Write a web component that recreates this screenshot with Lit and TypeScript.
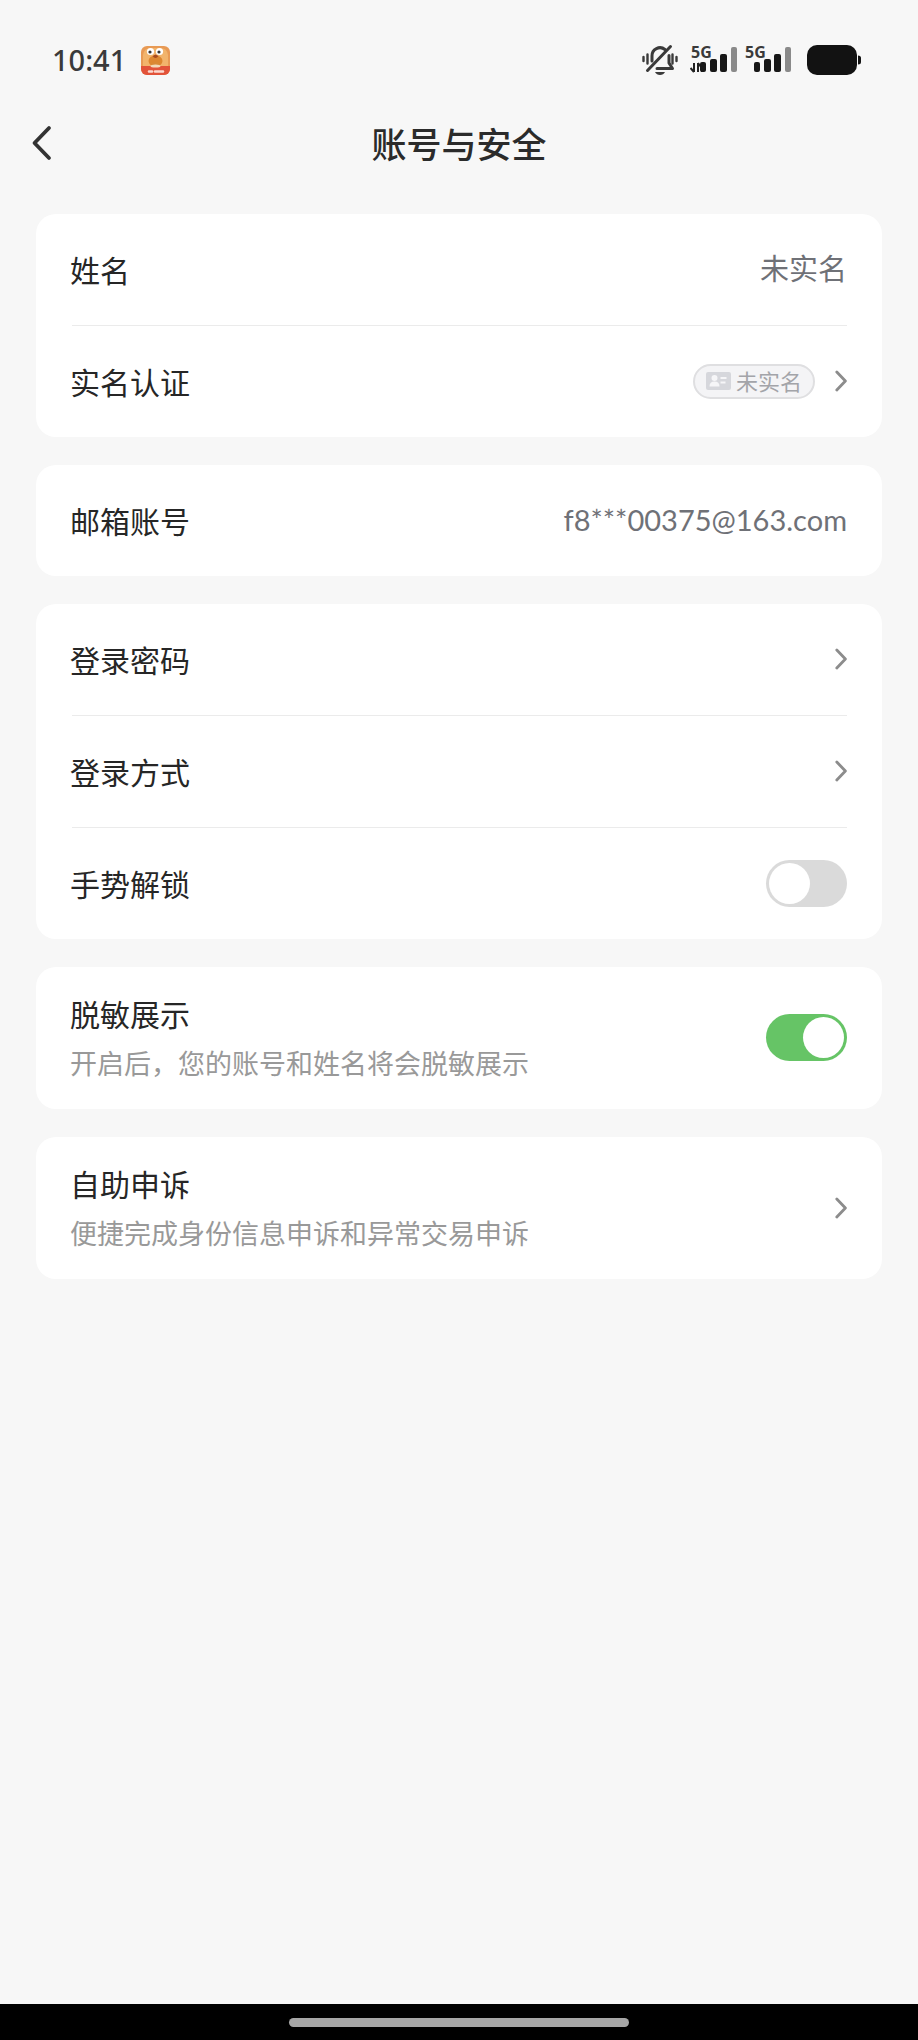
import { LitElement, html, svg, css, nothing } from "lit";
import { customElement, property, state } from "lit/decorators.js";

type Row = {
  id: string;
  label: string;
  note?: string;
  value?: string;
  badge?: string;
  kind: "text" | "link" | "switch";
};

const GROUPS: Row[][] = [
  [
    { id: "name", label: "姓名", value: "未实名", kind: "text" },
    { id: "verify", label: "实名认证", badge: "未实名", kind: "link" },
  ],
  [{ id: "email", label: "邮箱账号", value: "f8***00375@163.com", kind: "text" }],
  [
    { id: "password", label: "登录密码", kind: "link" },
    { id: "method", label: "登录方式", kind: "link" },
    { id: "gesture", label: "手势解锁", kind: "switch" },
  ],
  [{ id: "mask", label: "脱敏展示", note: "开启后，您的账号和姓名将会脱敏展示", kind: "switch" }],
  [{ id: "appeal", label: "自助申诉", note: "便捷完成身份信息申诉和异常交易申诉", kind: "link" }],
];

@customElement("status-bar")
export class StatusBar extends LitElement {
  static styles = css`
    :host {
      display: flex;
      align-items: center;
      justify-content: space-between;
      height: 56px;
      padding: 32px 57px 0 52px;
    }
    .side {
      display: flex;
      align-items: center;
    }
    .time {
      font-family: "Noto Sans", sans-serif;
      font-size: 29px;
      line-height: 40px;
      font-weight: 500;
      color: #3a3a3a;
    }
    .app {
      margin-left: 15px;
    }
    .bell {
      margin-right: 12px;
    }
    .signal {
      margin-right: 5px;
    }
    .signal.last {
      margin-right: 14px;
    }
    svg {
      display: block;
    }
    .net {
      font-family: "Noto Sans", sans-serif;
      font-size: 16px;
      font-weight: 700;
      fill: #3a3a3a;
    }
  `;

  private signal(last: boolean) {
    return html`<svg class="signal ${last ? "last" : ""}" width="49" height="46" viewBox="0 -8 49 46" aria-hidden="true">
      <text class="net" x="1" y="13">5G</text>
      ${last
        ? nothing
        : svg`<path d="M4 18v9M4 27l-3.500-4M8 27v-9M8 18l3 4M12 18v9" fill="none" stroke="#222" stroke-width="2" />`}
      <rect x="10" y="17" width="6" height="10" rx="2" fill="#171717" />
      <rect x="20" y="14" width="7" height="13" rx="2" fill="#171717" />
      <rect x="30" y="9" width="7" height="18" rx="2" fill="#171717" />
      <rect x="41" y="2" width="6" height="25" rx="2" fill="#8a8a8a" />
    </svg>`;
  }

  render() {
    return html`
      <div class="side">
        <span class="time">10:41</span>
        <svg class="app" width="29" height="29" viewBox="0 0 29 29" aria-hidden="true">
          <defs>
            <clipPath id="tile"><rect width="29" height="29" rx="6" /></clipPath>
          </defs>
          <g clip-path="url(#tile)">
            <rect width="29" height="29" fill="#e89a55" />
            <path d="M2 21V9Q3 2 10 2h9q7 0 8 7v12z" fill="#f2b46c" />
            <ellipse cx="14.500" cy="15" rx="7" ry="5.500" fill="#dd8730" />
            <rect y="20" width="29" height="9" fill="#e2533a" />
            <path d="M10 21q0-5 4.500-5t4.500 5z" fill="#d98a35" />
            <ellipse cx="14.500" cy="20" rx="5" ry="1.600" fill="#f3d9b8" />
            <circle cx="9.500" cy="5.500" r="3.600" fill="#fff" />
            <circle cx="18.500" cy="5.500" r="3.600" fill="#fff" />
            <circle cx="9" cy="6" r="1.600" fill="#333" />
            <circle cx="18" cy="6" r="1.600" fill="#333" />
            <path d="M11.500 10q3 4 6 0l-3-1.500z" fill="#a84a1c" />
            <path d="M8 25.500h3M14 25.500h8" stroke="#fbd9cf" stroke-width="2.600" stroke-linecap="round" />
          </g>
        </svg>
      </div>
      <div class="side">
        <svg class="bell" width="36" height="32" viewBox="0 0 36 32" fill="none" stroke="#3a3a3a" stroke-linecap="round" stroke-linejoin="round" aria-hidden="true">
          <path d="M10 17v-5a8 8 0 0 1 13-6.500" stroke-width="3" />
          <path d="M27 11.500v7.500l3.500 5.500H15" stroke-width="3" />
          <path d="M5.500 26.500 28.500 2.500" stroke-width="3" />
          <path d="M13 28h10q-1.500 3-5 3t-5-3z" fill="#3a3a3a" stroke="none" />
          <path d="M5.500 10.500v9M30.500 10.500v9M1.500 13v4M34.500 13v4" stroke-width="2.400" />
        </svg>
        ${this.signal(false)} ${this.signal(true)}
        <svg width="54" height="30" viewBox="0 0 54 30" aria-hidden="true">
          <rect width="50" height="30" rx="10" fill="#121212" />
          <path d="M51 10.500q3 0 3 2.500v4q0 2.500-3 2.500z" fill="#121212" />
        </svg>
      </div>
    `;
  }
}

@customElement("settings-row")
export class SettingsRow extends LitElement {
  static styles = css`
    :host {
      display: block;
    }
    .row {
      box-sizing: border-box;
      display: flex;
      align-items: center;
      justify-content: space-between;
      gap: 20px;
      width: 100%;
      min-height: 111px;
      margin: 0;
      padding: 21px 35px 22px 34px;
      border: 0;
      background: none;
      font: inherit;
      color: inherit;
      text-align: left;
    }
    button.row,
    .switch {
      cursor: pointer;
    }
    .texts {
      display: flex;
      flex-direction: column;
    }
    .label {
      font-size: 30px;
      line-height: 50px;
      color: #262626;
    }
    .note {
      font-size: 27px;
      line-height: 49px;
      color: #999;
    }
    .value {
      font-family: Lato, "Noto Sans CJK SC", sans-serif;
      font-size: 29px;
      line-height: 50px;
      color: #6f7177;
    }
    .tail {
      display: flex;
      align-items: center;
      gap: 20px;
    }
    .badge {
      box-sizing: border-box;
      display: flex;
      align-items: center;
      gap: 5px;
      height: 35px;
      padding: 0 11px;
      border: 2px solid #dfdfe1;
      border-radius: 18px;
      background: #f4f4f6;
      font-size: 22px;
      line-height: 28px;
      color: #a3a4a9;
    }
    .badge-text {
      padding-bottom: 3px;
    }
    svg {
      display: block;
      flex: none;
    }
    .switch {
      appearance: none;
      box-sizing: border-box;
      flex: none;
      display: flex;
      width: 81px;
      height: 47px;
      margin: 0;
      padding: 3px;
      border-radius: 24px;
      background: #dadada;
    }
    .switch::before {
      content: "";
      width: 41px;
      height: 41px;
      border-radius: 50%;
      background: #fff;
    }
    .switch:checked {
      justify-content: flex-end;
      background: #66c466;
    }
  `;

  @property({ attribute: false }) row!: Row;
  @property({ type: Boolean }) on = false;

  private texts() {
    const { label, note, kind } = this.row;
    return html`<span class="texts">
      ${kind === "switch"
        ? html`<label class="label" for="control">${label}</label>`
        : html`<span class="label">${label}</span>`}
      ${note ? html`<span class="note">${note}</span>` : nothing}
    </span>`;
  }

  private toggle(e: Event) {
    this.on = (e.target as HTMLInputElement).checked;
  }

  render() {
    const { value, badge, kind } = this.row;
    if (kind === "link") {
      return html`<button class="row" type="button">
        ${this.texts()}
        <span class="tail">
          ${badge
            ? html`<span class="badge">
                <svg width="25" height="18" viewBox="0 0 25 18" aria-hidden="true">
                  <rect width="25" height="18" rx="2" fill="#d6d7dc" />
                  <circle cx="8.500" cy="6" r="3" fill="#f6f6f8" />
                  <path d="M3.500 14.500q0-5 5-5t5 5z" fill="#f6f6f8" />
                  <path d="M14.500 6h6M14.500 10.500h5" stroke="#f6f6f8" stroke-width="1.800" />
                </svg>
                <span class="badge-text">${badge}</span>
              </span>`
            : nothing}
          <svg width="12" height="22" viewBox="0 0 12 22" aria-hidden="true">
            <path d="M1.800 2 10.400 11 1.800 20" fill="none" stroke="#8c8c8c" stroke-width="2.800" stroke-linecap="round" stroke-linejoin="round" />
          </svg>
        </span>
      </button>`;
    }
    return html`<div class="row">
      ${this.texts()}
      ${kind === "switch"
        ? html`<input class="switch" id="control" type="checkbox" role="switch" .checked=${this.on} @change=${this.toggle} />`
        : html`<span class="value">${value}</span>`}
    </div>`;
  }
}

@customElement("app-root")
export class AppRoot extends LitElement {
  static styles = css`
    :host {
      display: flex;
      flex-direction: column;
      min-height: 100vh;
      background: #f7f7f7;
      font-family: "Noto Sans CJK SC", sans-serif;
      color: #262626;
    }
    .nav {
      display: grid;
      grid-template-columns: 60px 1fr 60px;
      align-items: center;
      height: 110px;
      padding: 0 25px;
    }
    .back {
      display: flex;
      align-items: center;
      width: 48px;
      height: 48px;
      margin: 0;
      padding: 0 6px;
      border: 0;
      background: none;
      cursor: pointer;
    }
    .title {
      margin: 0;
      font-size: 35px;
      line-height: 50px;
      font-weight: 500;
      text-align: center;
      color: #2b2b2b;
    }
    .groups {
      flex: 1;
      display: flex;
      flex-direction: column;
      gap: 28px;
      padding: 16px 36px 28px;
    }
    .card {
      border-radius: 20px;
      background: #fff;
    }
    .line {
      height: 1px;
      margin: 0 35px 0 36px;
      border: 0;
      background: #ebebeb;
    }
    .home {
      display: flex;
      align-items: center;
      justify-content: center;
      height: 36px;
      background: #000;
    }
    .handle {
      width: 37%;
      height: 9px;
      border-radius: 5px;
      background: #a6a6a6;
    }
  `;

  @state() private enabled = new Set(["mask"]);

  render() {
    return html`
      <status-bar></status-bar>
      <header class="nav">
        <button class="back" type="button" aria-label="返回">
          <svg width="22" height="36" viewBox="0 0 22 36" aria-hidden="true">
            <path d="M18 3 3.500 18 18 33" fill="none" stroke="#333" stroke-width="3.800" stroke-linecap="round" stroke-linejoin="round" />
          </svg>
        </button>
        <h1 class="title">账号与安全</h1>
      </header>
      <main class="groups">
        ${GROUPS.map(
          (rows) => html`<section class="card">
            ${rows.map(
              (row, i) => html`${i ? html`<hr class="line" />` : nothing}
                <settings-row .row=${row} .on=${this.enabled.has(row.id)}></settings-row>`
            )}
          </section>`
        )}
      </main>
      <footer class="home"><div class="handle"></div></footer>
    `;
  }
}
